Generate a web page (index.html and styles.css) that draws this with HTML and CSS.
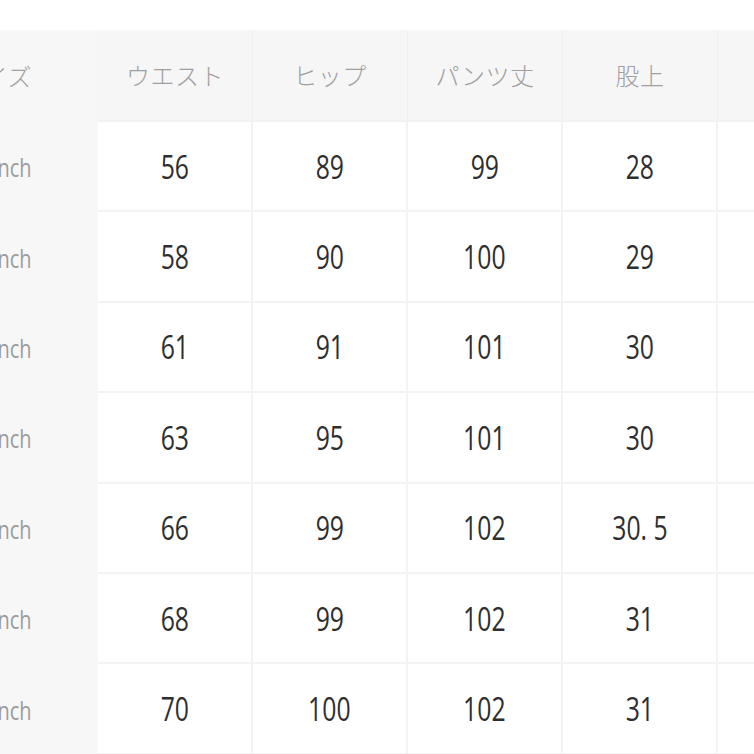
FILE: index.html
```html
<!DOCTYPE html>
<html lang="ja">
<head>
<meta charset="utf-8">
<title>サイズ表</title>
<link rel="stylesheet" href="styles.css">
</head>
<body>
<div class="chart">
  <div class="cell head first"><span class="lbl">サイズ</span></div>
  <div class="cell head">ウエスト</div>
  <div class="cell head">ヒップ</div>
  <div class="cell head">パンツ丈</div>
  <div class="cell head">股上</div>
  <div class="cell head"></div>

  <div class="cell first"><span class="sz">22inch</span></div>
  <div class="cell"><span class="num">56</span></div>
  <div class="cell"><span class="num">89</span></div>
  <div class="cell"><span class="num">99</span></div>
  <div class="cell"><span class="num">28</span></div>
  <div class="cell"></div>

  <div class="cell first"><span class="sz">23inch</span></div>
  <div class="cell"><span class="num">58</span></div>
  <div class="cell"><span class="num">90</span></div>
  <div class="cell"><span class="num">100</span></div>
  <div class="cell"><span class="num">29</span></div>
  <div class="cell"></div>

  <div class="cell first"><span class="sz">24inch</span></div>
  <div class="cell"><span class="num">61</span></div>
  <div class="cell"><span class="num">91</span></div>
  <div class="cell"><span class="num">101</span></div>
  <div class="cell"><span class="num">30</span></div>
  <div class="cell"></div>

  <div class="cell first"><span class="sz">25inch</span></div>
  <div class="cell"><span class="num">63</span></div>
  <div class="cell"><span class="num">95</span></div>
  <div class="cell"><span class="num">101</span></div>
  <div class="cell"><span class="num">30</span></div>
  <div class="cell"></div>

  <div class="cell first"><span class="sz">26inch</span></div>
  <div class="cell"><span class="num">66</span></div>
  <div class="cell"><span class="num">99</span></div>
  <div class="cell"><span class="num">102</span></div>
  <div class="cell"><span class="num">30. 5</span></div>
  <div class="cell"></div>

  <div class="cell first"><span class="sz">27inch</span></div>
  <div class="cell"><span class="num">68</span></div>
  <div class="cell"><span class="num">99</span></div>
  <div class="cell"><span class="num">102</span></div>
  <div class="cell"><span class="num">31</span></div>
  <div class="cell"></div>

  <div class="cell first"><span class="sz">28inch</span></div>
  <div class="cell"><span class="num">70</span></div>
  <div class="cell"><span class="num">100</span></div>
  <div class="cell"><span class="num">102</span></div>
  <div class="cell"><span class="num">31</span></div>
  <div class="cell"></div>
</div>
</body>
</html>
```

FILE: styles.css
```css
html, body {
  margin: 0;
  padding: 0;
  background: #ffffff;
  overflow: hidden;
  width: 754px;
  height: 754px;
}

.chart {
  display: grid;
  grid-template-columns: 202px repeat(5, 155px);
  grid-template-rows: 92px repeat(7, 90.4px);
  margin-top: 30px;
  margin-left: -104px;
  width: 977px;
}

.cell {
  box-sizing: border-box;
  display: flex;
  align-items: center;
  justify-content: center;
  background: #ffffff;
  border-right: 2px solid #f3f3f3;
  border-bottom: 2px solid #f3f3f3;
}

.head {
  background: #f6f6f6;
  border-right: 1px solid #f0f0f0;
  border-bottom: 2px solid #f2f2f2;
  font-family: "Noto Sans CJK JP", sans-serif;
  font-weight: 300;
  font-size: 24px;
  color: #a0a0a0;
  letter-spacing: 0.5px;
  padding-bottom: 2px;
}

.first {
  background: #f7f7f7;
  border-right: none;
  border-bottom: none;
  justify-content: flex-end;
  padding-right: 66px;
}

.lbl {
  font-family: "Noto Sans CJK JP", sans-serif;
  font-weight: 300;
  font-size: 24px;
  color: #a0a0a0;
}

.sz {
  display: inline-block;
  font-family: "Open Sans", sans-serif;
  font-size: 25px;
  color: #9c9c9c;
  transform: scaleX(0.8);
  transform-origin: right center;
}

.num {
  display: inline-block;
  font-family: "Open Sans", sans-serif;
  font-size: 33px;
  color: #2e2e2e;
  transform: scaleX(0.75);
  white-space: pre;
}
```
